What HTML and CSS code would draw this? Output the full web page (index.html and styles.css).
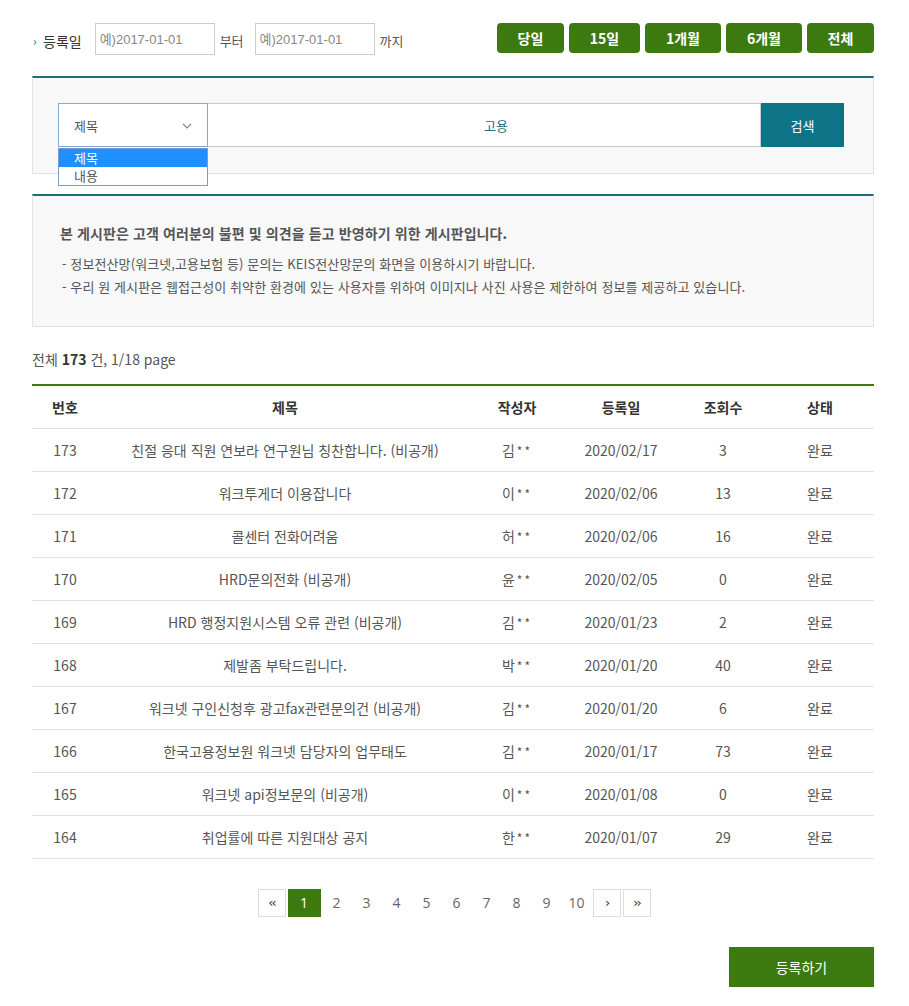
FILE: index.html
```html
<!DOCTYPE html>
<html lang="ko">
<head>
<meta charset="utf-8">
<link rel="stylesheet" href="styles.css">
</head>
<body>
<div class="wrap">
  <div class="daterow">
    <div class="dateleft">
      <span class="arrow">›</span>
      <span class="dlabel">등록일</span>
      <input class="dinput" type="text" placeholder="예)2017-01-01">
      <span class="dtext">부터</span>
      <input class="dinput" type="text" placeholder="예)2017-01-01">
      <span class="dtext">까지</span>
    </div>
    <div class="dbtns">
      <button class="dbtn w67">당일</button>
      <button class="dbtn w71">15일</button>
      <button class="dbtn w76">1개월</button>
      <button class="dbtn w76">6개월</button>
      <button class="dbtn w67">전체</button>
    </div>
  </div>

  <div class="searchbox">
    <div class="searchrow">
      <div class="selwrap">
        <div class="select">
          <span>제목</span>
          <svg class="chev" width="10" height="6" viewBox="0 0 10 6"><path d="M1 1 L5 5 L9 1" fill="none" stroke="#888" stroke-width="1.2"/></svg>
        </div>
        <ul class="options">
          <li class="opt on">제목</li>
          <li class="opt">내용</li>
        </ul>
      </div>
      <div class="sinput">고용</div>
      <button class="sbtn">검색</button>
    </div>
  </div>

  <div class="infobox">
    <p class="infotitle">본 게시판은 고객 여러분의 불편 및 의견을 듣고 반영하기 위한 게시판입니다.</p>
    <p class="infoline">- 정보전산망(워크넷,고용보험 등) 문의는 KEIS전산망문의 화면을 이용하시기 바랍니다.</p>
    <p class="infoline">- 우리 원 게시판은 웹접근성이 취약한 환경에 있는 사용자를 위하여 이미지나 사진 사용은 제한하여 정보를 제공하고 있습니다.</p>
  </div>

  <p class="total">전체 <b>173</b> 건, 1/18 page</p>

  <table class="board">
    <colgroup>
      <col class="c1"><col class="c2"><col class="c3"><col class="c4"><col class="c5"><col class="c6">
    </colgroup>
    <thead>
      <tr><th>번호</th><th>제목</th><th>작성자</th><th>등록일</th><th>조회수</th><th>상태</th></tr>
    </thead>
    <tbody>
      <tr><td>173</td><td>친절 응대 직원 연보라 연구원님 칭찬합니다. (비공개)</td><td>김<span class="ast">**</span></td><td>2020/02/17</td><td>3</td><td>완료</td></tr>
      <tr><td>172</td><td>워크투게더 이용잡니다</td><td>이<span class="ast">**</span></td><td>2020/02/06</td><td>13</td><td>완료</td></tr>
      <tr><td>171</td><td>콜센터 전화어려움</td><td>허<span class="ast">**</span></td><td>2020/02/06</td><td>16</td><td>완료</td></tr>
      <tr><td>170</td><td>HRD문의전화 (비공개)</td><td>윤<span class="ast">**</span></td><td>2020/02/05</td><td>0</td><td>완료</td></tr>
      <tr><td>169</td><td>HRD 행정지원시스템 오류 관련 (비공개)</td><td>김<span class="ast">**</span></td><td>2020/01/23</td><td>2</td><td>완료</td></tr>
      <tr><td>168</td><td>제발좀 부탁드립니다.</td><td>박<span class="ast">**</span></td><td>2020/01/20</td><td>40</td><td>완료</td></tr>
      <tr><td>167</td><td>워크넷 구인신청후 광고fax관련문의건 (비공개)</td><td>김<span class="ast">**</span></td><td>2020/01/20</td><td>6</td><td>완료</td></tr>
      <tr><td>166</td><td>한국고용정보원 워크넷 담당자의 업무태도</td><td>김<span class="ast">**</span></td><td>2020/01/17</td><td>73</td><td>완료</td></tr>
      <tr><td>165</td><td>워크넷 api정보문의 (비공개)</td><td>이<span class="ast">**</span></td><td>2020/01/08</td><td>0</td><td>완료</td></tr>
      <tr><td>164</td><td>취업률에 따른 지원대상 공지</td><td>한<span class="ast">**</span></td><td>2020/01/07</td><td>29</td><td>완료</td></tr>
    </tbody>
  </table>

  <div class="paging">
    <a class="pbox">‹‹</a>
    <a class="pnum on">1</a>
    <a class="pnum">2</a>
    <a class="pnum">3</a>
    <a class="pnum">4</a>
    <a class="pnum">5</a>
    <a class="pnum">6</a>
    <a class="pnum">7</a>
    <a class="pnum">8</a>
    <a class="pnum">9</a>
    <a class="pnum">10</a>
    <a class="pbox">›</a>
    <a class="pbox">››</a>
  </div>

  <div class="actions">
    <button class="regbtn">등록하기</button>
  </div>
</div>
</body>
</html>
```
FILE: styles.css
```css
* { box-sizing: border-box; }
body {
  margin: 0;
  background: #fff;
  font-family: "Noto Sans CJK KR", "Noto Sans", sans-serif;
  color: #333;
}
.wrap {
  width: 842px;
  margin-left: 32px;
  padding-top: 23px;
}
.daterow {
  display: flex;
  justify-content: space-between;
  align-items: flex-start;
  height: 32px;
}
.dateleft {
  display: flex;
  align-items: center;
  height: 32px;
  padding-top: 3px;
}
.arrow {
  color: #1a6f7a;
  font-size: 12px;
  width: 10px;
  margin-left: 1px;
}
.dlabel {
  font-size: 14px;
  color: #333;
  margin-right: 13px;
}
.dinput {
  width: 120px;
  height: 32px;
  margin-top: -3px;
  border: 1px solid #ccc;
  padding: 0 4px;
  font-family: "Liberation Sans", "Noto Sans CJK KR", sans-serif;
  font-size: 13px;
  color: #555;
  outline: none;
}
.dinput::placeholder { color: #888; }
.dtext {
  font-size: 13px;
  color: #555;
  margin: 0 11px 0 5px;
}
.dbtns {
  display: flex;
  gap: 5px;
}
.dbtn {
  height: 30px;
  border: 0;
  border-radius: 4px;
  background: #3c7a10;
  color: #fff;
  font-family: "Noto Sans CJK KR", sans-serif;
  font-weight: 700;
  font-size: 14px;
  padding: 0;
}
.w67 { width: 67px; }
.w71 { width: 71px; }
.w76 { width: 76px; }

.searchbox {
  margin-top: 21px;
  border-top: 2px solid #1a6f7a;
  border-left: 1px solid #e2e2e2;
  border-right: 1px solid #e2e2e2;
  border-bottom: 1px solid #e2e2e2;
  background: #f8f8f8;
  height: 98px;
  padding: 25px 29px 0 25px;
}
.searchrow {
  display: flex;
  height: 44px;
}
.selwrap {
  position: relative;
  width: 150px;
}
.select {
  height: 44px;
  border: 1px solid #86a8d8;
  background: #fff;
  display: flex;
  align-items: center;
  justify-content: space-between;
  padding: 0 15px 0 15px;
  font-size: 13px;
  color: #555;
}
.chev { margin-top: 1px; }
.options {
  position: absolute;
  left: 0;
  top: 45px;
  width: 150px;
  margin: 0;
  padding: 0;
  list-style: none;
  border: 1px solid #7a9cc6;
  background: #fff;
  z-index: 2;
}
.opt {
  height: 18px;
  line-height: 18px;
  padding-left: 15px;
  font-size: 13px;
  color: #555;
}
.opt.on { background: #1e90ff; color: #fff; }
.sinput {
  flex: 1;
  height: 44px;
  border: 1px solid #ccc;
  border-left: 0;
  background: #fff;
  display: flex;
  align-items: center;
  justify-content: center;
  font-size: 13px;
  color: #1a6f7a;
  padding-left: 24px;
}
.sbtn {
  width: 83px;
  height: 44px;
  border: 0;
  background: #0d7488;
  color: #fff;
  font-family: "Noto Sans CJK KR", sans-serif;
  font-size: 13px;
  padding: 0;
}

.infobox {
  margin-top: 20px;
  border-top: 2px solid #1a6f7a;
  border-left: 1px solid #e2e2e2;
  border-right: 1px solid #e2e2e2;
  border-bottom: 1px solid #e2e2e2;
  background: #f8f8f8;
  height: 133px;
  padding: 26px 0 0 27px;
}
.infotitle {
  margin: 0 0 8px;
  font-size: 14px;
  letter-spacing: 0.1px;
  font-weight: 700;
  color: #555;
  line-height: 22px;
}
.infoline {
  margin: 0;
  font-size: 13px;
  letter-spacing: 0.1px;
  color: #555;
  line-height: 23px;
  padding-left: 2px;
}

.total {
  margin: 20px 0 0;
  font-size: 14px;
  color: #555;
  line-height: 24px;
}
.total b { color: #333; font-weight: 700; }

.board {
  margin-top: 13px;
  width: 842px;
  border-collapse: collapse;
  border-top: 2px solid #3c7a10;
  table-layout: fixed;
}
.c1 { width: 66px; }
.c2 { width: 374px; }
.c3 { width: 90px; }
.c4 { width: 118px; }
.c5 { width: 86px; }
.c6 { width: 108px; }
.board th {
  height: 43px;
  font-size: 14px;
  font-weight: 700;
  color: #333;
  border-bottom: 1px solid #e2e2e2;
  text-align: center;
  padding: 0;
}
.board td {
  height: 43px;
  font-size: 14px;
  color: #555;
  border-bottom: 1px solid #e2e2e2;
  text-align: center;
  padding: 0;
}
.ast {
  font-size: 12px;
  letter-spacing: 2px;
  margin-left: 2px;
}

.paging {
  display: flex;
  justify-content: center;
  align-items: center;
  margin-top: 30px;
  height: 28px;
  gap: 2px;
  padding-left: 2px;
}
.pbox {
  width: 28px;
  height: 28px;
  border: 1px solid #ddd;
  display: flex;
  align-items: center;
  justify-content: center;
  font-size: 13px;
  color: #333;
  font-family: "DejaVu Sans", sans-serif;
  letter-spacing: -2px;
}
.pnum {
  width: 28px;
  height: 28px;
  display: flex;
  align-items: center;
  justify-content: center;
  font-size: 14px;
  color: #666;
  font-family: "Open Sans", sans-serif;
}
.pnum.on {
  width: 33px;
  background: #3c7a10;
  color: #fff;
}

.actions {
  display: flex;
  justify-content: flex-end;
  margin-top: 30px;
}
.regbtn {
  width: 145px;
  height: 40px;
  border: 0;
  background: #3c7a10;
  color: #fff;
  font-family: "Noto Sans CJK KR", sans-serif;
  font-size: 14px;
  padding: 0;
}
```
